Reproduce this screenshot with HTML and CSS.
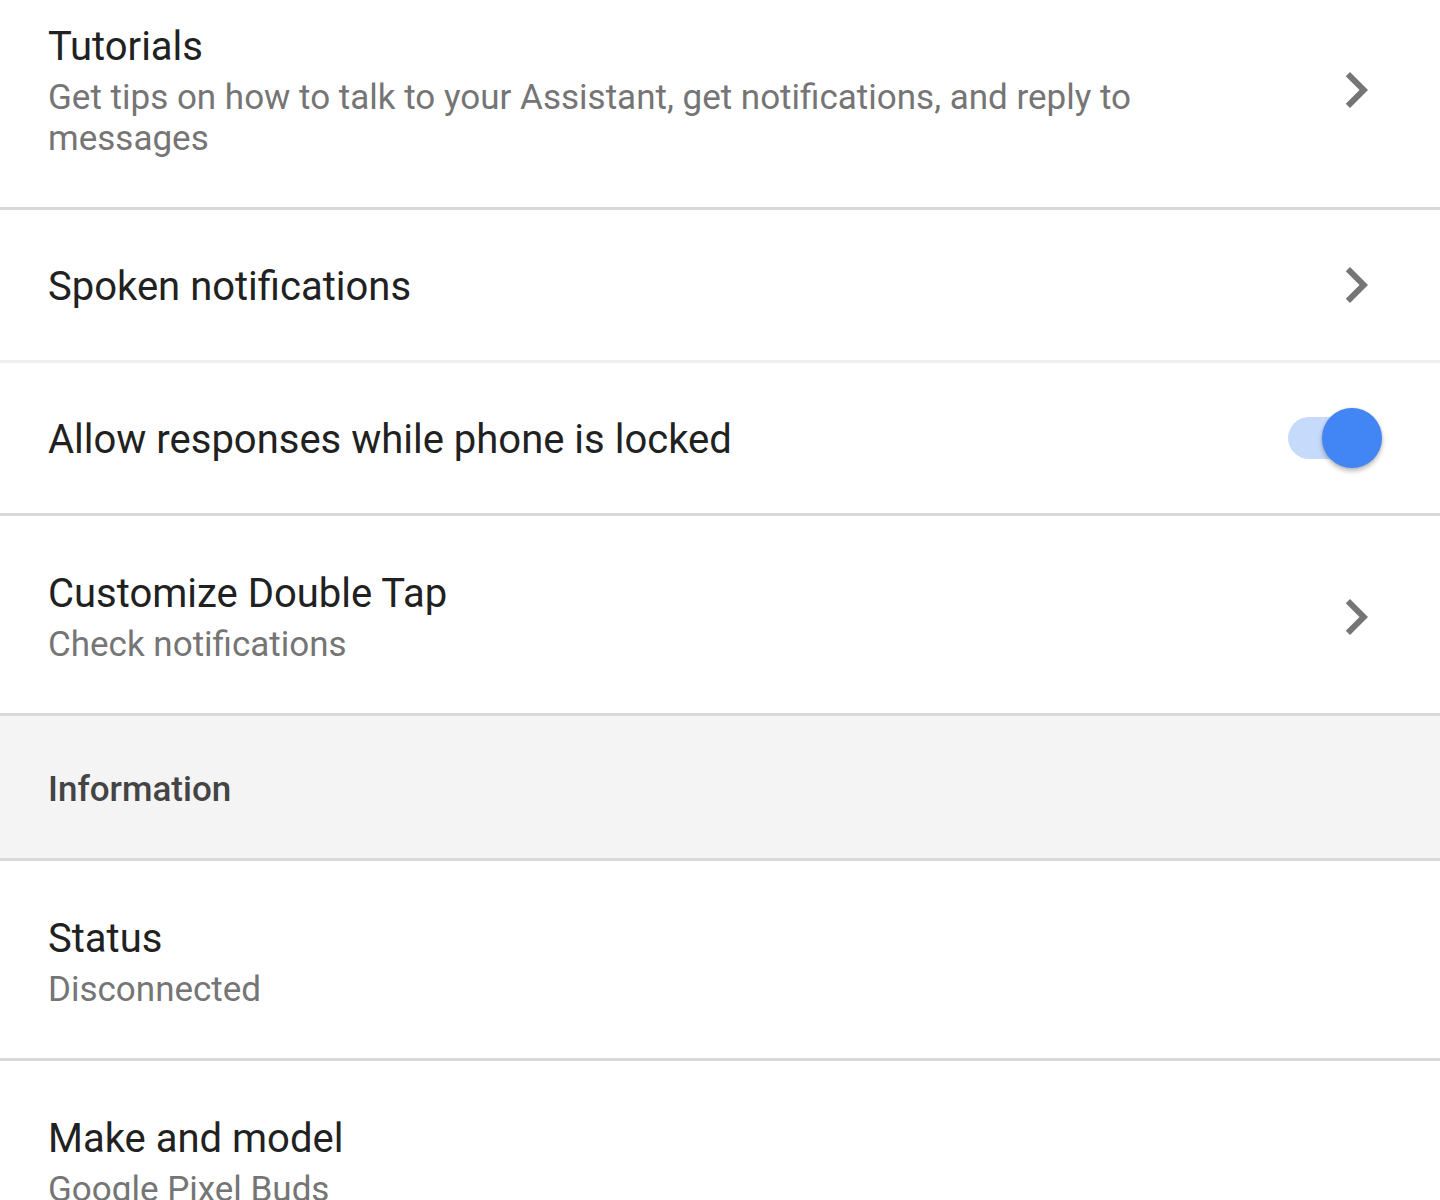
FILE: index.html
```html
<!DOCTYPE html>
<html>
<head>
<meta charset="utf-8">
<link rel="stylesheet" href="styles.css">
</head>
<body>
<div class="list">
  <div class="row two-line strong">
    <div class="text">
      <div class="title">Tutorials</div>
      <div class="sub">Get tips on how to talk to your Assistant, get notifications, and reply to messages</div>
    </div>
    <svg class="chev" viewBox="0 0 24 24"><path d="M10 6L8.59 7.41 13.17 12l-4.58 4.59L10 18l6-6z"/></svg>
  </div>
  <div class="row one-line light">
    <div class="text"><div class="title">Spoken notifications</div></div>
    <svg class="chev" viewBox="0 0 24 24"><path d="M10 6L8.59 7.41 13.17 12l-4.58 4.59L10 18l6-6z"/></svg>
  </div>
  <div class="row one-line strong">
    <div class="text"><div class="title">Allow responses while phone is locked</div></div>
    <div class="switch"><span class="track"></span><span class="thumb"></span></div>
  </div>
  <div class="row two-line strong">
    <div class="text">
      <div class="title">Customize Double Tap</div>
      <div class="sub">Check notifications</div>
    </div>
    <svg class="chev" viewBox="0 0 24 24"><path d="M10 6L8.59 7.41 13.17 12l-4.58 4.59L10 18l6-6z"/></svg>
  </div>
  <div class="header">Information</div>
  <div class="row two-line strong">
    <div class="text">
      <div class="title">Status</div>
      <div class="sub">Disconnected</div>
    </div>
  </div>
  <div class="row two-line">
    <div class="text">
      <div class="title">Make and model</div>
      <div class="sub">Google Pixel Buds</div>
    </div>
  </div>
</div>
</body>
</html>
```

FILE: styles.css
```css
html, body {
  margin: 0;
  padding: 0;
  background: #ffffff;
  font-family: Roboto, "Noto Sans", sans-serif;
  overflow: hidden;
}
.list {
  margin-top: -31px;
}
.row {
  display: flex;
  align-items: center;
  padding: 0 48px 0 48px;
  box-sizing: border-box;
}
.row.strong { border-bottom: 3px solid #d9d9d9; }
.row.light { border-bottom: 3px solid #efefef; }
.row.two-line {
  padding-top: 52px;
  padding-bottom: 48px;
}
.row.one-line {
  height: 153px;
}
.text {
  flex: 1;
  min-width: 0;
  padding-right: 130px;
}
.one-line .text {
  padding-top: 4px;
}
.title {
  font-size: 40px;
  line-height: 52px;
  color: #212121;
}
.sub {
  margin-top: 4px;
  font-size: 35px;
  line-height: 41px;
  color: #757575;
}
.chev {
  width: 72px;
  height: 72px;
  fill: #757575;
  flex: none;
}
.switch {
  position: relative;
  width: 96px;
  height: 60px;
  flex: none;
  margin-right: 10px;
}
.track {
  position: absolute;
  left: 2px;
  top: 9px;
  width: 84px;
  height: 42px;
  border-radius: 21px;
  background: #c6dafb;
}
.thumb {
  position: absolute;
  left: 36px;
  top: 0;
  width: 60px;
  height: 60px;
  border-radius: 50%;
  background: #4285f4;
  box-shadow: 0 3px 5px rgba(0,0,0,0.28), 0 0 2px rgba(0,0,0,0.12);
}
.header {
  height: 145px;
  box-sizing: border-box;
  display: flex;
  align-items: center;
  padding: 4px 48px 0;
  background: #f4f4f4;
  border-bottom: 3px solid #d9d9d9;
  font-size: 35px;
  font-weight: 500;
  color: #444444;
}
```
